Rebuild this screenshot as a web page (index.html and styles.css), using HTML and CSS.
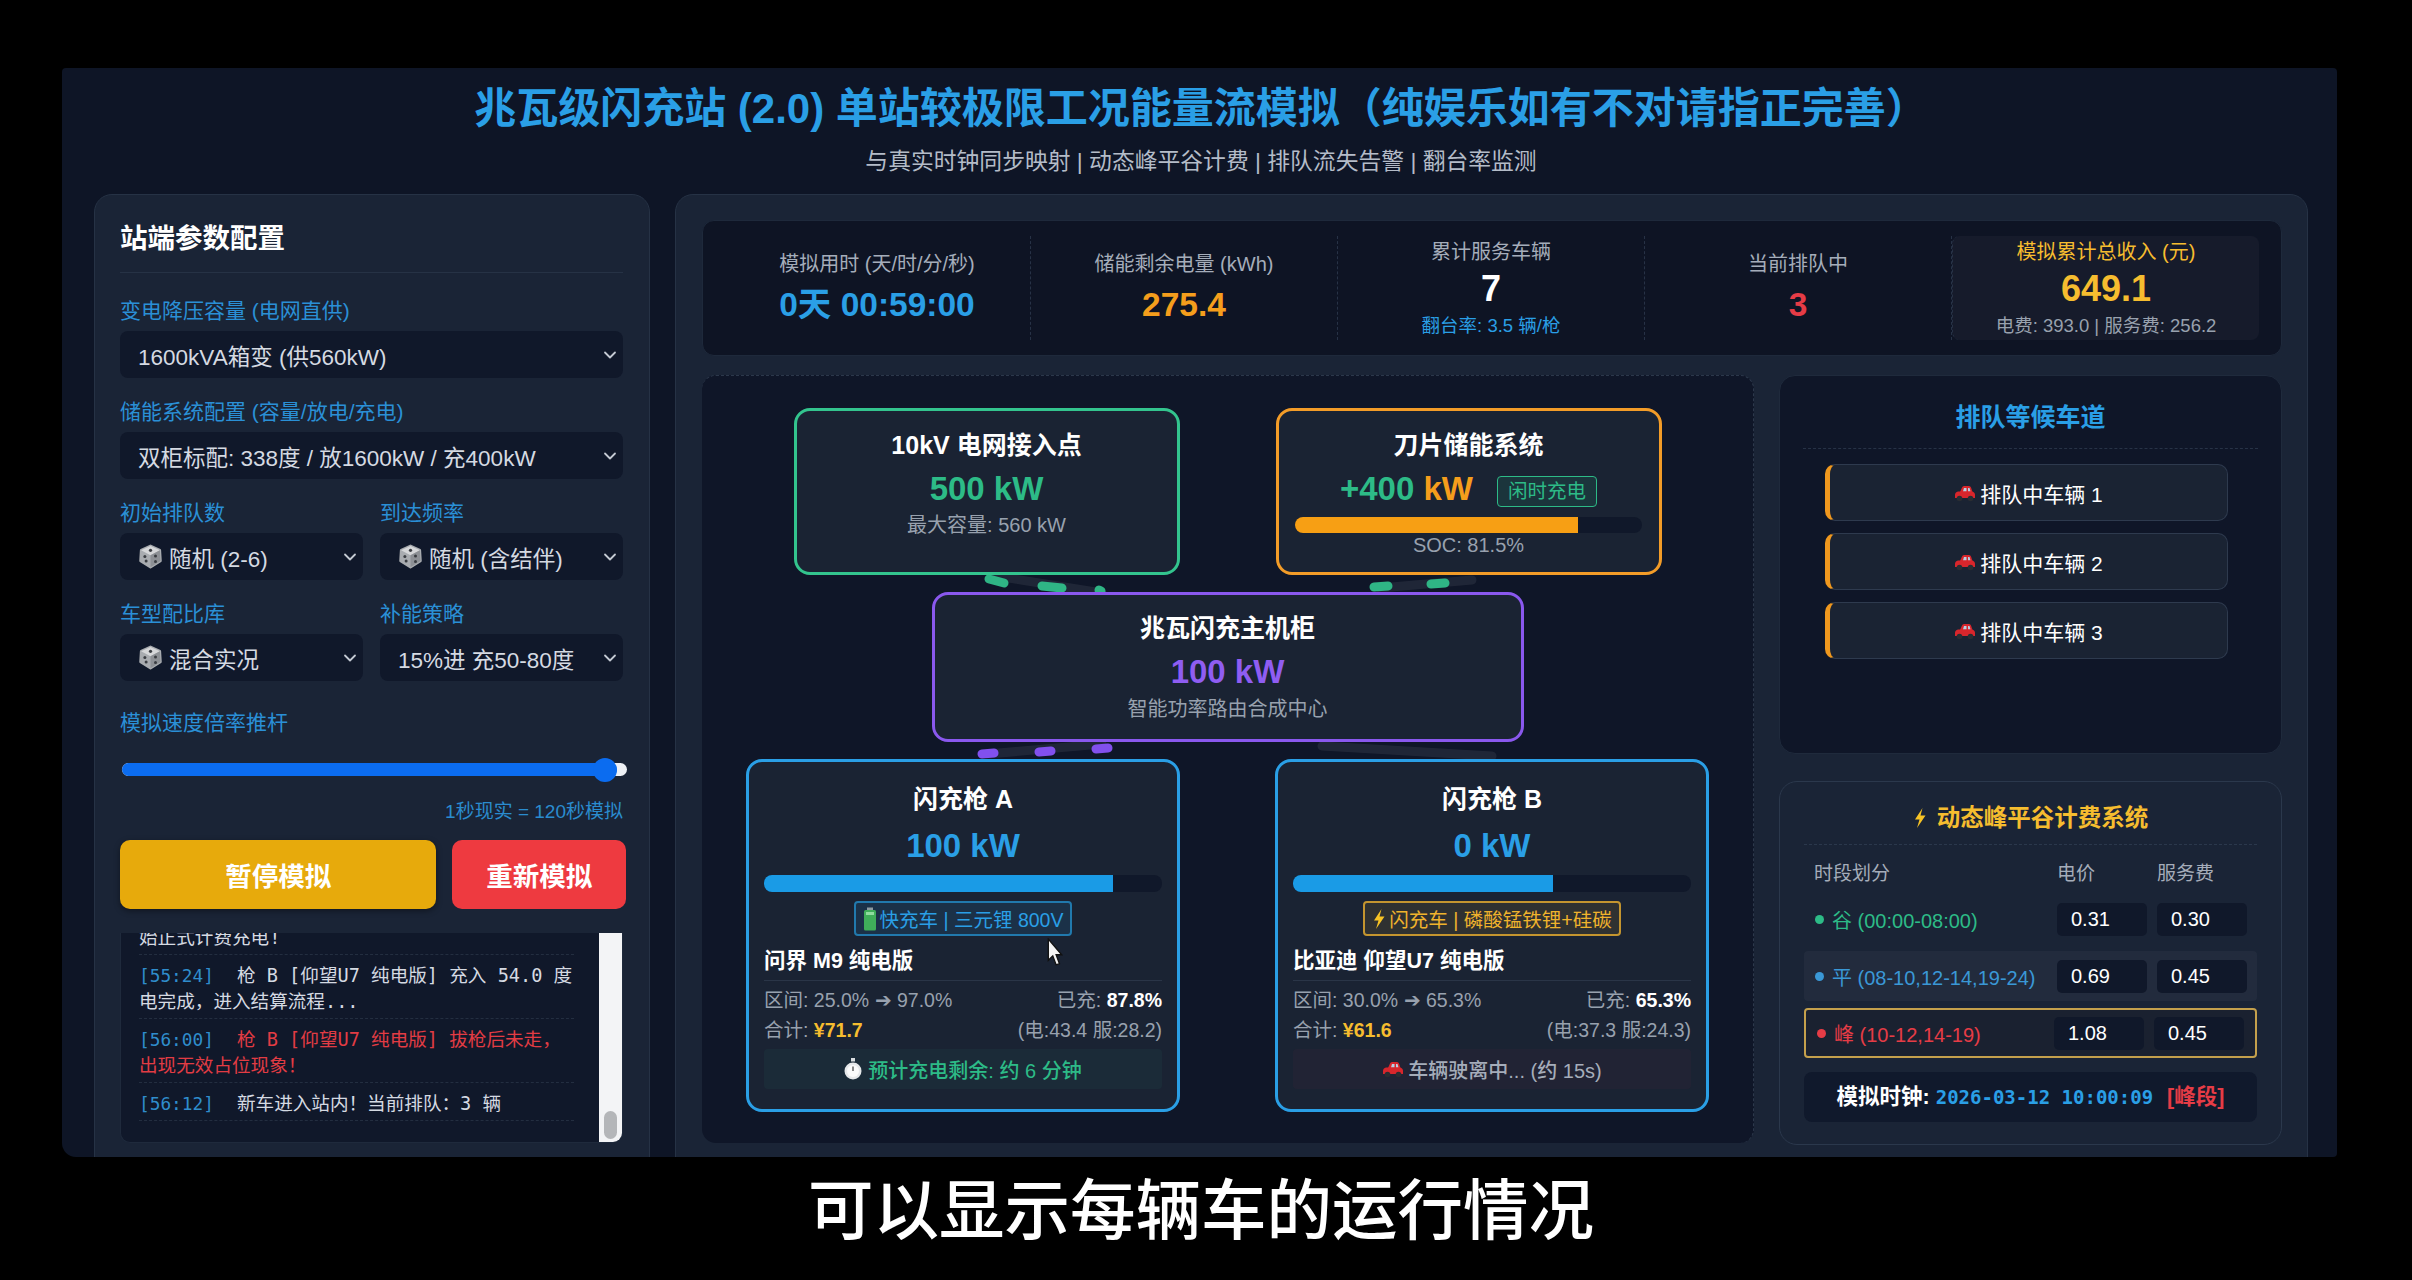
FILE: index.html

```html
<!DOCTYPE html>
<html lang="zh-CN">
<head>
  <meta charset="UTF-8" />
  <title>兆瓦级闪充站能量流模拟</title>
  <link rel="stylesheet" href="styles.css">
</head>
<body>
  <svg class="icon-defs">
    <symbol id="dice" viewBox="0 0 20 20">
      <path d="M10 1.5 L17.5 5 L18 13.5 L10 18.5 L2 13.5 L2.5 5 Z" fill="#a9acb0" stroke="#a9acb0" stroke-width="2" stroke-linejoin="round"/>
      <path d="M10 1.5 L17.5 5 L10 9 L2.5 5 Z" fill="#d6d7d9"/>
      <path d="M10 9 L17.5 5 L18 13.5 L10 18.5 Z" fill="#8d9095"/>
      <circle cx="10" cy="5" r="1.3" fill="#3a3d42"/>
      <circle cx="5.5" cy="10" r="1.2" fill="#3a3d42"/>
      <circle cx="6.5" cy="13.5" r="1.2" fill="#3a3d42"/>
      <circle cx="14" cy="9.5" r="1.2" fill="#3a3d42"/>
      <circle cx="14" cy="14" r="1.2" fill="#3a3d42"/>
    </symbol>
    <symbol id="chevron" viewBox="0 0 14 10">
      <path d="M2 2.5 L7 7.5 L12 2.5" fill="none" stroke="#c4cad3" stroke-width="1.8" stroke-linecap="round" stroke-linejoin="round"/>
    </symbol>
    <symbol id="car" viewBox="0 0 22 18">
      <path d="M6 8 L8 3.5 Q8.5 2 10 2 L15 2 Q16.5 2 17 3.5 L18.5 8 Z" fill="#d8262c"/>
      <path d="M9 7.5 L10 4 L12.5 4 L12.5 7.5 Z" fill="#b9d0e4"/>
      <path d="M14 7.5 L14 4 L15.5 4 L16.5 7.5 Z" fill="#b9d0e4"/>
      <path d="M1 11 Q1 8 4 7.5 L18 7.5 Q21 8 21 11 L21 14 L1 14 Z" fill="#d8262c"/>
      <circle cx="5.5" cy="14.5" r="2.8" fill="#2a2d33"/>
      <circle cx="16.5" cy="14.5" r="2.8" fill="#2a2d33"/>
    </symbol>
    <symbol id="battery" viewBox="0 0 14 24">
      <rect x="4" y="0.5" width="6" height="3" fill="#8d9aa0"/>
      <rect x="1" y="3" width="12" height="20.5" rx="1.5" fill="#3fae5a"/>
      <rect x="3" y="5" width="8" height="3" fill="#8fdd9f"/>
    </symbol>
    <symbol id="bolt" viewBox="0 0 14 22">
      <path d="M9.5 1 L2 12.5 L6.5 12.5 L4 21 L12.5 8.5 L7.5 8.5 Z" fill="#f7c325"/>
    </symbol>
    <symbol id="watch" viewBox="0 0 18 24">
      <rect x="7" y="1" width="4" height="3.5" fill="#d9dde0"/>
      <circle cx="9" cy="14" r="8.5" fill="#e6e8ea"/>
      <circle cx="9" cy="14" r="6" fill="#fbfbfb"/>
      <path d="M9 14 L9 9.5" stroke="#555" stroke-width="1.4"/>
    </symbol>
  </svg>

  <div class="app">
    <header class="app-header">
      <h1>兆瓦级闪充站 (2.0) 单站较极限工况能量流模拟（纯娱乐如有不对请指正完善）</h1>
      <p>与真实时钟同步映射 | 动态峰平谷计费 | 排队流失告警 | 翻台率监测</p>
    </header>

    <main class="layout">
      <aside class="sidebar">
        <h2>站端参数配置</h2>

        <div class="field">
          <label>变电降压容量 (电网直供)</label>
          <div class="select"><span>1600kVA箱变 (供560kW)</span><svg class="chevron"><use href="#chevron"/></svg></div>
        </div>
        <div class="field">
          <label>储能系统配置 (容量/放电/充电)</label>
          <div class="select"><span>双柜标配: 338度 / 放1600kW / 充400kW</span><svg class="chevron"><use href="#chevron"/></svg></div>
        </div>
        <div class="field-row">
          <div class="field">
            <label>初始排队数</label>
            <div class="select"><span><svg class="dice"><use href="#dice"/></svg>随机 (2-6)</span><svg class="chevron"><use href="#chevron"/></svg></div>
          </div>
          <div class="field">
            <label>到达频率</label>
            <div class="select"><span><svg class="dice"><use href="#dice"/></svg>随机 (含结伴)</span><svg class="chevron"><use href="#chevron"/></svg></div>
          </div>
        </div>
        <div class="field-row">
          <div class="field">
            <label>车型配比库</label>
            <div class="select"><span><svg class="dice"><use href="#dice"/></svg>混合实况</span><svg class="chevron"><use href="#chevron"/></svg></div>
          </div>
          <div class="field">
            <label>补能策略</label>
            <div class="select"><span>15%进 充50-80度</span><svg class="chevron"><use href="#chevron"/></svg></div>
          </div>
        </div>

        <div class="speed">
          <label>模拟速度倍率推杆</label>
          <div class="slider">
            <div class="slider-fill" style="width: 98%"><span class="slider-thumb"></span></div>
          </div>
          <div class="speed-note">1秒现实 = 120秒模拟</div>
        </div>

        <div class="actions">
          <button class="btn btn-pause">暂停模拟</button>
          <button class="btn btn-reset">重新模拟</button>
        </div>

        <div class="log">
          <div class="log-body">
            <div class="log-entry">始正式计费充电!</div>
            <div class="log-entry"><span class="log-time">[55:24]</span>枪 B [仰望U7 纯电版] 充入 54.0 度电完成，进入结算流程...</div>
            <div class="log-entry log-alert"><span class="log-time">[56:00]</span>枪 B [仰望U7 纯电版] 拔枪后未走，出现无效占位现象！</div>
            <div class="log-entry"><span class="log-time">[56:12]</span>新车进入站内！当前排队：3 辆</div>
          </div>
          <div class="log-scrollbar"><span></span></div>
        </div>
      </aside>

      <section class="board">
        <div class="stats">
          <div class="stat">
            <div class="stat-label">模拟用时 (天/时/分/秒)</div>
            <div class="stat-value text-blue">0天 00:59:00</div>
          </div>
          <div class="stat">
            <div class="stat-label">储能剩余电量 (kWh)</div>
            <div class="stat-value text-orange">275.4</div>
          </div>
          <div class="stat stat-wide">
            <div class="stat-label">累计服务车辆</div>
            <div class="stat-value text-white">7</div>
            <div class="stat-sub stat-sub-blue">翻台率: 3.5 辆/枪</div>
          </div>
          <div class="stat">
            <div class="stat-label">当前排队中</div>
            <div class="stat-value text-red">3</div>
          </div>
          <div class="stat stat-wide stat-revenue">
            <div class="stat-label">模拟累计总收入 (元)</div>
            <div class="stat-value text-yellow">649.1</div>
            <div class="stat-sub">电费: 393.0 | 服务费: 256.2</div>
          </div>
        </div>

        <div class="board-grid">
          <div class="flow">
            <svg class="flow-lines">
              <path class="line-faint" d="M294 200 L400 217"/>
              <path class="line-faint" d="M678 212 L770 204"/>
              <path class="line-faint" d="M286 378 L400 368"/>
              <path class="line-faint" d="M620 370 L790 380"/>
              <path class="line-green" d="M287 203 L302 207"/>
              <path class="line-green" d="M340 210 L360 212"/>
              <path class="line-green" d="M397 214 L399 215"/>
              <path class="line-green" d="M672 211 L686 210"/>
              <path class="line-green" d="M729 208 L743 207"/>
              <path class="line-purple" d="M280 378 L292 377"/>
              <path class="line-purple" d="M337 376 L349 375"/>
              <path class="line-purple" d="M394 373 L406 372"/>
            </svg>

            <div class="flow-row">
              <div class="node node-top node-grid">
                <div class="node-title">10kV 电网接入点</div>
                <div class="node-value text-green">500 kW</div>
                <div class="node-sub">最大容量: 560 kW</div>
              </div>
              <div class="node node-top node-storage">
                <div class="node-title">刀片储能系统</div>
                <div class="value-row">
                  <span class="node-value"><span class="text-green">+400</span> <span class="text-orange">kW</span></span>
                  <span class="mode-tag">闲时充电</span>
                </div>
                <div class="bar"><div class="bar-fill bar-orange" style="width: 81.5%"></div></div>
                <div class="node-sub soc">SOC: 81.5%</div>
              </div>
            </div>

            <div class="flow-row">
              <div class="node node-host">
                <div class="node-title">兆瓦闪充主机柜</div>
                <div class="node-value text-purple">100 kW</div>
                <div class="node-sub">智能功率路由合成中心</div>
              </div>
            </div>

            <div class="flow-row flow-row-guns">
              <div class="node node-gun">
                <div class="node-title">闪充枪 A</div>
                <div class="node-value text-blue">100 kW</div>
                <div class="bar"><div class="bar-fill bar-blue" style="width: 87.8%"></div></div>
                <div class="car-tag car-tag-fast"><svg class="tag-icon"><use href="#battery"/></svg>快充车 | 三元锂 800V</div>
                <div class="car-name">问界 M9 纯电版</div>
                <div class="car-row"><span>区间: 25.0% ➔ 97.0%</span><span>已充: <b>87.8%</b></span></div>
                <div class="car-row"><span>合计: <b class="price-total">¥71.7</b></span><span>(电:43.4 服:28.2)</span></div>
                <div class="status status-charging"><svg class="status-icon"><use href="#watch"/></svg>预计充电剩余: 约 6 分钟</div>
                <svg class="cursor" viewBox="0 0 14 26"><path d="M1 1 L1 20 L5 16 L8 24 L11 23 L8 15 L13 15 Z" fill="#f4f4f4" stroke="#111" stroke-width="1.2"/></svg>
              </div>
              <div class="node node-gun">
                <div class="node-title">闪充枪 B</div>
                <div class="node-value text-blue">0 kW</div>
                <div class="bar"><div class="bar-fill bar-blue" style="width: 65.3%"></div></div>
                <div class="car-tag car-tag-flash"><svg class="tag-icon"><use href="#bolt"/></svg>闪充车 | 磷酸锰铁锂+硅碳</div>
                <div class="car-name">比亚迪 仰望U7 纯电版</div>
                <div class="car-row"><span>区间: 30.0% ➔ 65.3%</span><span>已充: <b>65.3%</b></span></div>
                <div class="car-row"><span>合计: <b class="price-total">¥61.6</b></span><span>(电:37.3 服:24.3)</span></div>
                <div class="status status-leaving"><svg class="car-icon"><use href="#car"/></svg>车辆驶离中... (约 15s)</div>
              </div>
            </div>
          </div>

          <div class="side-column">
            <div class="queue">
              <h3>排队等候车道</h3>
              <div class="queue-item"><svg class="car-icon"><use href="#car"/></svg>排队中车辆 1</div>
              <div class="queue-item"><svg class="car-icon"><use href="#car"/></svg>排队中车辆 2</div>
              <div class="queue-item"><svg class="car-icon"><use href="#car"/></svg>排队中车辆 3</div>
            </div>

            <div class="pricing">
              <h3><svg class="title-bolt"><use href="#bolt"/></svg>动态峰平谷计费系统</h3>
              <div class="price-head"><span>时段划分</span><span>电价</span><span>服务费</span></div>
              <div class="price-row text-green">
                <span class="period"><i class="dot"></i>谷 (00:00-08:00)</span>
                <span class="price-box">0.31</span>
                <span class="price-box">0.30</span>
              </div>
              <div class="price-row price-row-mid text-sky">
                <span class="period"><i class="dot"></i>平 (08-10,12-14,19-24)</span>
                <span class="price-box">0.69</span>
                <span class="price-box">0.45</span>
              </div>
              <div class="price-row price-row-active text-red">
                <span class="period"><i class="dot"></i>峰 (10-12,14-19)</span>
                <span class="price-box">1.08</span>
                <span class="price-box">0.45</span>
              </div>
              <div class="clock">模拟时钟: <span class="clock-time">2026-03-12 10:00:09</span><span class="text-red">[峰段]</span></div>
            </div>
          </div>
        </div>
      </section>
    </main>
  </div>

  <div class="caption">可以显示每辆车的运行情况</div>
</body>
</html>
```

FILE: styles.css

```css
* {
  box-sizing: border-box;
}
body {
  margin: 0;
  height: 1280px;
  overflow: hidden;
  background: #000;
  color: #fff;
  font-family: "Liberation Sans", "Noto Sans CJK SC", sans-serif;
}
.icon-defs {
  display: block;
  width: 0;
  height: 0;
}
.text-blue { color: #2a9fe6; }
.text-sky { color: #3a98d6; }
.text-orange { color: #f59e1c; }
.text-yellow { color: #f6bd2f; }
.text-white { color: #fff; }
.text-red { color: #e63c46; }
.text-green { color: #2dbb87; }
.text-purple { color: #8f5df2; }

.app {
  margin: 68px 75px 0 62px;
  height: 1089px;
  padding: 0 29px 0 32px;
  overflow: hidden;
  background: #0e1526;
  border-radius: 4px 4px 4px 14px;
}
.app-header {
  padding-top: 17px;
  height: 126px;
  text-align: center;
  white-space: nowrap;
}
.app-header h1 {
  margin: 0;
  font-size: 42px;
  line-height: 48px;
  font-weight: 700;
  color: #2a9fe6;
}
.app-header p {
  margin: 14px 0 0;
  font-size: 22.8px;
  line-height: 28px;
  color: #b4bcc8;
}
.layout {
  display: flex;
  gap: 25px;
  align-items: flex-start;
}

/* left config panel */
.sidebar {
  width: 556px;
  height: 1000px;
  padding: 26px 26px 0 25px;
  background: #1a2436;
  border: 1px solid #263245;
  border-radius: 18px 18px 0 0;
}
.sidebar h2 {
  margin: 0 0 25px;
  padding-bottom: 15px;
  font-size: 27.5px;
  line-height: 36px;
  border-bottom: 1px solid #263245;
}
.sidebar label {
  display: block;
  margin-bottom: 7px;
  font-size: 21px;
  line-height: 26px;
  color: #2a90d6;
}
.field {
  margin-bottom: 21px;
}
.field-row {
  display: grid;
  grid-template-columns: 243px 243px;
  gap: 17px;
}
.select {
  display: flex;
  align-items: center;
  justify-content: space-between;
  height: 47px;
  padding: 0 6px 0 18px;
  background: #10182a;
  border-radius: 8px;
  font-size: 22.5px;
  color: #d5dae2;
  white-space: nowrap;
}
.select span {
  display: flex;
  align-items: center;
}
.chevron {
  width: 14px;
  height: 10px;
  flex: none;
}
.dice {
  width: 25px;
  height: 25px;
  margin-right: 6px;
}
.speed {
  margin-top: 8px;
}
.speed label {
  margin: 0;
}
.slider {
  height: 13px;
  margin: 27px -4px 0 2px;
  background: #eef1f5;
  border-radius: 7px;
}
.slider-fill {
  display: flex;
  justify-content: flex-end;
  align-items: center;
  height: 13px;
  background: #0b6cf0;
  border-radius: 7px;
}
.slider-thumb {
  flex: none;
  width: 24px;
  height: 24px;
  background: #0b6cf0;
  border-radius: 50%;
}
.speed-note {
  margin-top: 23px;
  padding-right: 0;
  text-align: right;
  font-size: 19px;
  line-height: 26px;
  color: #2a8ccf;
}
.actions {
  display: flex;
  gap: 16px;
  margin: 15px -3px 0 0;
}
.btn {
  height: 69px;
  border: none;
  border-radius: 10px;
  color: #fff;
  font-family: inherit;
  font-size: 26.5px;
  font-weight: 700;
}
.btn-pause {
  width: 317px;
  background: #e7aa0c;
  box-shadow: 0 2px 6px rgba(0, 0, 0, 0.4);
}
.btn-reset {
  width: 174px;
  background: #ee3a40;
}
.log {
  display: flex;
  height: 210px;
  margin-top: 24px;
  background: #10182a;
  border: 1px solid #1f2a3c;
  border-top: none;
  border-radius: 0 0 10px 10px;
  overflow: hidden;
}
.log-body {
  flex: 1;
  min-width: 0;
  display: flex;
  flex-direction: column;
  justify-content: flex-end;
  padding: 0 25px 21px 18px;
  overflow: hidden;
  font-family: "DejaVu Sans Mono", "Noto Sans CJK SC", monospace;
  font-size: 18.6px;
  line-height: 26px;
  color: #d5dae2;
}
.log-entry {
  flex: none;
  padding: 8px 0 3px;
  border-bottom: 1px dashed #232e40;
}
.log-alert {
  color: #e23c44;
}
.log-time {
  margin-right: 23px;
  font-size: 17.8px;
  color: #2f8dcc;
}
.log-scrollbar {
  flex: none;
  display: flex;
  align-items: flex-end;
  justify-content: center;
  width: 23px;
  padding-bottom: 3px;
  background: #f3f4f6;
}
.log-scrollbar span {
  width: 13px;
  height: 28px;
  background: #b4b6b9;
  border-radius: 7px;
}

/* right main board */
.board {
  width: 1633px;
  height: 1000px;
  padding: 25px 25px 0 26px;
  background: #1a2436;
  border: 1px solid #263245;
  border-radius: 18px 18px 0 0;
}
.stats {
  display: flex;
  height: 136px;
  padding: 15px 21px;
  background: #0e1424;
  border: 1px solid #1e293b;
  border-radius: 12px;
}
.stat {
  width: 307px;
  display: flex;
  flex-direction: column;
  align-items: center;
  justify-content: center;
  border-right: 1px dashed #273246;
  white-space: nowrap;
}
.stat-label {
  font-size: 20px;
  line-height: 26px;
  color: #a5adba;
}
.stat-value {
  margin-top: 7px;
  font-size: 33.5px;
  line-height: 42px;
  font-weight: 700;
}
.stat-wide .stat-value {
  margin: 3px 0 4px;
  font-size: 36px;
}
.stat-sub {
  font-size: 18.5px;
  line-height: 24px;
  color: #98a1ae;
}
.stat-sub-blue {
  color: #2a9fe6;
}
.stat-revenue {
  border-right: none;
  border-left: 1px dashed #273246;
  border-radius: 8px;
  background: #161b2b;
}
.stat-revenue .stat-label {
  color: #f6bd2f;
}
.board-grid {
  display: flex;
  gap: 25px;
  margin-top: 19px;
}

/* energy flow diagram */
.flow {
  position: relative;
  display: flex;
  flex-direction: column;
  gap: 17px;
  width: 1052px;
  height: 768px;
  padding-top: 32px;
  background: #0f1628;
  border-top: 1px dashed #2c384b;
  border-right: 1px dashed #2c384b;
  border-radius: 14px;
}
.flow-lines {
  position: absolute;
  left: 0;
  top: 0;
  width: 100%;
  height: 100%;
}
.flow-lines path {
  fill: none;
  stroke-linecap: round;
  stroke-width: 9px;
}
.line-faint {
  stroke: rgba(255, 255, 255, 0.07);
}
.line-green {
  stroke: #2fb585;
}
.line-purple {
  stroke: #8250ee;
}
.flow-row {
  position: relative;
  display: flex;
  justify-content: center;
  gap: 96px;
}
.flow-row-guns {
  gap: 95px;
}
.node {
  position: relative;
  display: flex;
  flex-direction: column;
  align-items: center;
  background: #1a2333;
  border: 3px solid;
  border-radius: 16px;
  white-space: nowrap;
}
.node-top {
  width: 386px;
  height: 167px;
  padding-top: 18px;
}
.node-grid { border-color: #33c48e; }
.node-storage { border-color: #f39c28; }
.node-host {
  width: 592px;
  height: 150px;
  padding-top: 17px;
  border-color: #8a58ee;
}
.node-gun {
  width: 434px;
  height: 353px;
  padding: 21px 15px 0;
  border-color: #2a9fe6;
}
.node-title {
  font-size: 25px;
  line-height: 32px;
  font-weight: 700;
}
.node-value {
  margin-top: 8px;
  font-size: 33px;
  line-height: 40px;
  font-weight: 700;
}
.node-gun .node-value {
  margin-top: 11px;
}
.node-sub {
  margin-top: 3px;
  font-size: 20px;
  line-height: 26px;
  color: #98a1ae;
}
.node-host .node-sub {
  margin-top: 4px;
}
.value-row {
  display: flex;
  align-items: center;
  gap: 24px;
  height: 40px;
  margin-top: 8px;
}
.value-row .node-value {
  margin: 0;
}
.mode-tag {
  margin-top: 4px;
  padding: 0 10px;
  font-size: 19.5px;
  line-height: 29px;
  color: #2dbb87;
  background: rgba(45, 187, 135, 0.12);
  border: 1px solid #2dbb87;
  border-radius: 4px;
}
.bar {
  width: 100%;
  height: 16px;
  margin-top: 8px;
  background: #10182a;
  border-radius: 8px;
  overflow: hidden;
}
.node-top .bar {
  width: 347px;
}
.node-gun .bar {
  margin-top: 9px;
  height: 17px;
}
.bar-fill {
  height: 100%;
}
.bar-orange { background: #f79f14; }
.bar-blue { background: #1a9be6; }
.soc {
  margin-top: 0;
  line-height: 24px;
}
.car-tag {
  display: flex;
  align-items: center;
  height: 35px;
  margin-top: 9px;
  padding: 0 7px;
  font-size: 19.5px;
  border: 2px solid;
  border-radius: 4px;
}
.car-tag-fast {
  color: #2a9fe6;
  border-color: #2179ad;
  background: rgba(42, 159, 230, 0.12);
}
.car-tag-flash {
  color: #f0b32c;
  border-color: #c4952f;
  background: rgba(240, 179, 44, 0.1);
}
.tag-icon {
  width: 14px;
  height: 24px;
  margin-right: 3px;
}
.car-name {
  align-self: stretch;
  margin-top: 11px;
  padding-bottom: 5px;
  font-size: 21.5px;
  line-height: 28px;
  font-weight: 700;
  border-bottom: 1px solid #2a3547;
}
.car-row {
  align-self: stretch;
  display: flex;
  justify-content: space-between;
  margin-top: 2px;
  font-size: 19.5px;
  line-height: 28px;
  color: #98a1ae;
}
.car-name + .car-row {
  margin-top: 5px;
}
.car-row b {
  color: #fff;
}
.car-row b.price-total {
  color: #f6bd2f;
}
.status {
  align-self: stretch;
  display: flex;
  align-items: center;
  justify-content: center;
  height: 40px;
  margin-top: 5px;
  font-size: 20px;
  font-weight: 500;
  border-radius: 4px;
}
.status-charging {
  color: #2dbb87;
  background: rgba(45, 187, 135, 0.06);
}
.status-leaving {
  color: #a5adba;
  background: rgba(230, 60, 70, 0.04);
}
.status-icon {
  width: 18px;
  height: 24px;
  margin-right: 6px;
}
.car-icon {
  width: 22px;
  height: 18px;
  margin-right: 4px;
}
.cursor {
  position: absolute;
  left: 298px;
  top: 176px;
  width: 16px;
  height: 29px;
}

/* right column: queue and pricing */
.side-column {
  width: 503px;
  display: flex;
  flex-direction: column;
  gap: 27px;
}
.queue {
  height: 379px;
  padding: 25px 23px 0;
  background: #0f1628;
  border: 1px solid #1f2a3c;
  border-radius: 16px;
}
.queue h3 {
  margin: 0 0 15px;
  padding-bottom: 14px;
  text-align: center;
  font-size: 25px;
  line-height: 33px;
  font-weight: 700;
  color: #2a9fe6;
  border-bottom: 1px dashed #273246;
}
.queue-item {
  display: flex;
  align-items: center;
  justify-content: center;
  height: 57px;
  margin: 0 30px 12px 22px;
  font-size: 21px;
  background: #1a2333;
  border: 1px solid #2e3a4e;
  border-left: 5px solid #f0981e;
  border-radius: 10px;
}
.pricing {
  height: 364px;
  padding: 20px 24px 0;
  background: #1a2436;
  border: 1px solid #2b384c;
  border-radius: 18px;
}
.pricing h3 {
  display: flex;
  align-items: center;
  justify-content: center;
  margin: 0 0 16px;
  padding-bottom: 10px;
  font-size: 23.5px;
  line-height: 32px;
  color: #f6bd2f;
  border-bottom: 1px dashed #2b384c;
}
.title-bolt {
  width: 14px;
  height: 22px;
  margin-right: 10px;
}
.price-head,
.price-row {
  display: grid;
  grid-template-columns: 1fr 90px 90px;
  column-gap: 10px;
  align-items: center;
  padding: 0 10px;
}
.price-head {
  margin-bottom: 7px;
  font-size: 19px;
  line-height: 26px;
  color: #a5adba;
}
.price-row {
  height: 50px;
  margin-bottom: 7px;
  font-size: 20px;
  border-radius: 4px;
}
.price-row-mid {
  background: rgba(255, 255, 255, 0.035);
}
.price-row-active {
  padding: 0 11px 0 10px;
  border: 2px solid #c4a04c;
  background: #1a2130;
}
.period {
  display: flex;
  align-items: center;
  white-space: nowrap;
}
.dot {
  width: 9px;
  height: 9px;
  margin: 0 8px 0 1px;
  border-radius: 50%;
  background: currentColor;
}
.price-box {
  height: 33px;
  padding-left: 14px;
  line-height: 33px;
  color: #fff;
  background: #10182a;
  border-radius: 5px;
}
.clock {
  height: 50px;
  margin-top: 14px;
  text-align: center;
  font-size: 21.5px;
  line-height: 50px;
  font-weight: 700;
  white-space: nowrap;
  background: #10192c;
  border-radius: 8px;
}
.clock-time {
  margin-right: 14px;
  font-family: "DejaVu Sans Mono", monospace;
  font-size: 19px;
  color: #2a9fe6;
}

.caption {
  margin-top: 22px;
  padding-right: 10px;
  text-align: center;
  font-size: 65.5px;
  line-height: 65px;
  font-weight: 500;
  color: #fff;
}
```
